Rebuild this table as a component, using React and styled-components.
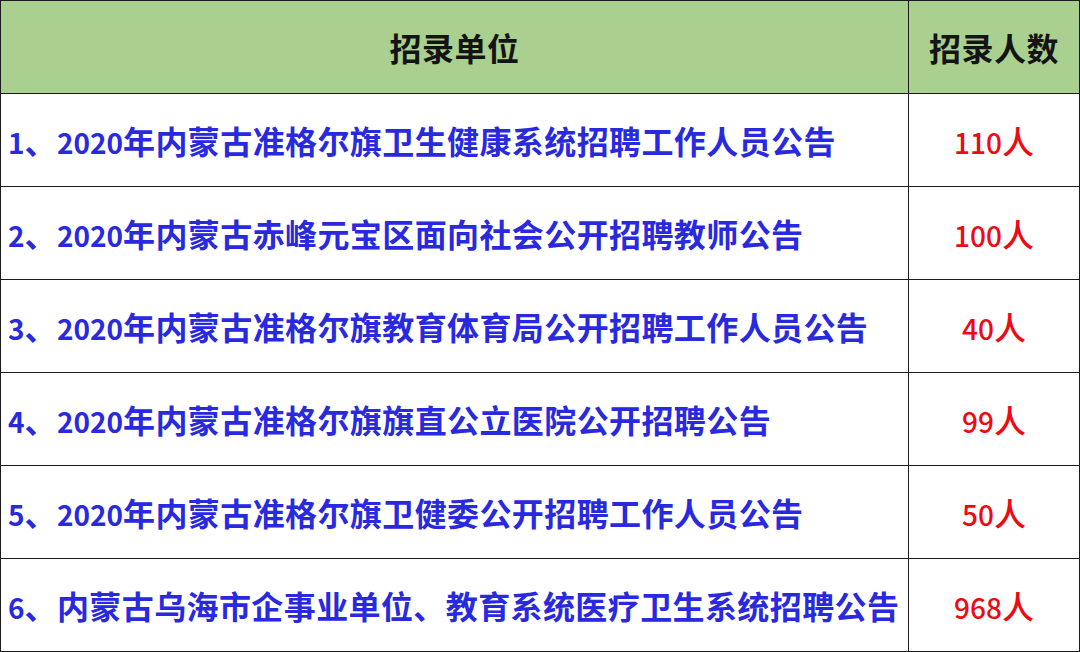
import React from "react";
import styled, { createGlobalStyle } from "styled-components";

const rows = [
  { name: "1、2020年内蒙古准格尔旗卫生健康系统招聘工作人员公告", count: "110人" },
  { name: "2、2020年内蒙古赤峰元宝区面向社会公开招聘教师公告", count: "100人" },
  { name: "3、2020年内蒙古准格尔旗教育体育局公开招聘工作人员公告", count: "40人" },
  { name: "4、2020年内蒙古准格尔旗旗直公立医院公开招聘公告", count: "99人" },
  { name: "5、2020年内蒙古准格尔旗卫健委公开招聘工作人员公告", count: "50人" },
  { name: "6、内蒙古乌海市企事业单位、教育系统医疗卫生系统招聘公告", count: "968人" },
];

// digits are set smaller than the CJK glyphs, as in the source sheet
const splitDigits = (text) =>
  text.split(/(\d+)/).map((part, i) =>
    /^\d+$/.test(part) ? <Num key={i}>{part}</Num> : <span key={i}>{part}</span>
  );

const GlobalStyle = createGlobalStyle`
  html, body {
    margin: 0;
    padding: 0;
    background: #ffffff;
  }
  body {
    font-family: "Noto Sans CJK SC", "Noto Sans", sans-serif;
  }
`;

const Table = styled.div`
  display: grid;
  grid-template-columns: 908px 171px;
  grid-auto-rows: 93px;
  width: 1080px;
  height: 652px;
  box-sizing: border-box;
  border-top: 1px solid #1c1c1c;
  border-left: 1px solid #1c1c1c;
`;

const Cell = styled.div`
  display: flex;
  align-items: center;
  justify-content: ${({ $center }) => ($center ? "center" : "flex-start")};
  padding-left: ${({ $center }) => ($center ? "0" : "7px")};
  box-sizing: border-box;
  border-right: 1px solid #1c1c1c;
  border-bottom: 1px solid #1c1c1c;
  background: ${({ $head }) => ($head ? "#a9d08e" : "#ffffff")};
  font-size: 32px;
  font-weight: 700;
  white-space: nowrap;
  overflow: hidden;
`;

const HeadText = styled.span`
  color: #141414;
  letter-spacing: 0.5px;
`;

const NameText = styled.span`
  color: #2929e0;
  letter-spacing: 0.4px;
`;

const CountText = styled.span`
  color: #ee0a14;
  font-weight: 500;
`;

const Num = styled.span`
  font-size: 28px;
  letter-spacing: 0;
`;

export default function App() {
  return (
    <>
      <GlobalStyle />
      <Table>
        <Cell $head $center>
          <HeadText>招录单位</HeadText>
        </Cell>
        <Cell $head $center>
          <HeadText>招录人数</HeadText>
        </Cell>
        {rows.map((r) => (
          <React.Fragment key={r.name}>
            <Cell>
              <NameText>{splitDigits(r.name)}</NameText>
            </Cell>
            <Cell $center>
              <CountText>{splitDigits(r.count)}</CountText>
            </Cell>
          </React.Fragment>
        ))}
      </Table>
    </>
  );
}
